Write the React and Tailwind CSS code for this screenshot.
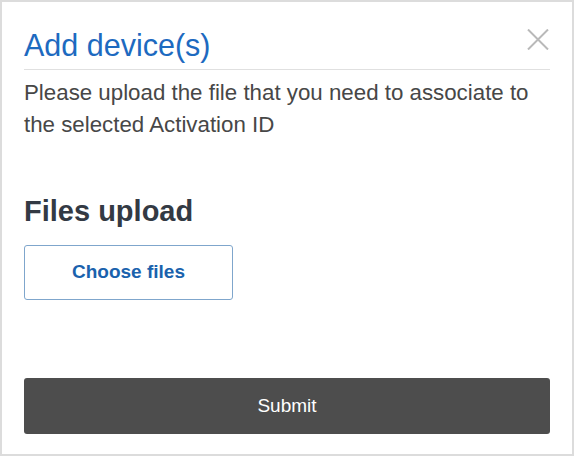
const App = () => {
  return (
    <div className="w-[574px] h-[456px] border-2 border-[#dcdcdc] bg-white px-[22px] font-['Liberation_Sans',Arial,sans-serif]">
      <div className="flex justify-between items-start pt-[25px]">
        <h2 className="text-[30.5px] leading-[36px] text-[#1d6ac0]">
          Add device(s)
        </h2>
        <button className="mt-[2px] mr-[1px] focus:outline-none">
          <svg width="22" height="21" viewBox="0 0 22 21">
            <path
              d="M1 0.5 L21 20.5 M21 0.5 L1 20.5"
              stroke="#b9b9b9"
              strokeWidth="2"
              fill="none"
            />
          </svg>
        </button>
      </div>
      <div className="mt-[6px] h-px bg-[#e0e0e0]" />
      <p className="mt-[7px] text-[22.3px] leading-[32px] text-[#474747]">
        Please upload the file that you need to associate to the selected
        Activation ID
      </p>
      <h3 className="mt-[53px] text-[29px] leading-[34px] font-bold text-[#333a44]">
        Files upload
      </h3>
      <button className="mt-[17px] w-[209px] h-[55px] border border-[#7fa6cc] rounded-[3px] text-[19px] font-bold text-[#1a62ad] focus:outline-none">
        Choose files
      </button>
      <button className="mt-[78px] w-full h-[56px] rounded-[3px] bg-[#4d4d4d] text-[19px] text-white focus:outline-none">
        Submit
      </button>
    </div>
  );
};
export default App;
